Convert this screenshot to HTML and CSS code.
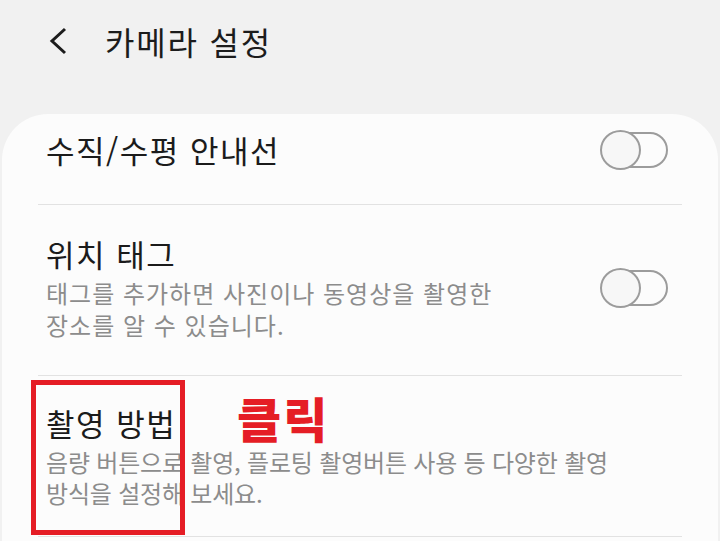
FILE: index.html
```html
<!DOCTYPE html>
<html lang="ko">
<head>
<meta charset="utf-8">
<link rel="stylesheet" href="styles.css">
</head>
<body>
<header class="appbar">
  <svg class="back" width="20" height="28" viewBox="0 0 20 28"><path d="M17 2 L4 14 L17 26" fill="none" stroke="#1c1c1c" stroke-width="3"/></svg>
  <h1 class="title">카메라 설정</h1>
</header>
<main class="card">
  <div class="row row-first">
    <div class="texts"><div class="label">수직/수평 안내선</div></div>
    <span class="toggle"><span class="knob"></span></span>
  </div>
  <div class="row row-second">
    <div class="texts">
      <div class="label">위치 태그</div>
      <div class="desc">태그를 추가하면 사진이나 동영상을 촬영한<br>장소를 알 수 있습니다.</div>
    </div>
    <span class="toggle"><span class="knob"></span></span>
  </div>
  <div class="row row-third">
    <div class="texts">
      <div class="label">촬영 방법</div>
      <div class="desc desc-tight">음량 버튼으로 촬영, 플로팅 촬영버튼 사용 등 다양한 촬영<br>방식을 설정해 보세요.</div>
    </div>
    <span class="highlight"></span>
    <span class="click">클릭</span>
  </div>
</main>
</body>
</html>
```
FILE: styles.css
```css
html, body {
  margin: 0;
  padding: 0;
  background: #f1f1f1;
  font-family: "Noto Sans CJK KR", "Noto Sans", sans-serif;
  overflow: hidden;
}
.appbar {
  height: 114px;
  box-sizing: border-box;
  display: flex;
  align-items: flex-start;
  padding: 24px 0 0 48px;
  gap: 37px;
}
.back {
  margin-top: 3px;
}
.title {
  margin: 0;
  font-size: 32px;
  line-height: 34px;
  font-weight: 400;
  color: #1c1c1c;
  letter-spacing: 1.8px;
}
.card {
  margin: 0 2px;
  background: #fcfcfc;
  border-radius: 46px 46px 0 0;
  padding: 0 36px;
  height: 440px;
}
.row {
  position: relative;
  display: flex;
  align-items: center;
  justify-content: space-between;
  padding-left: 8px;
  padding-right: 14px;
  border-bottom: 1.5px solid #e2e2e2;
}
.row-first {
  padding-top: 17px;
  padding-bottom: 35px;
}
.row-second {
  padding-top: 30px;
  padding-bottom: 34.5px;
}
.row-third {
  padding-top: 28px;
  padding-bottom: 27px;
}
.label {
  font-size: 31px;
  line-height: 38px;
  letter-spacing: 1.5px;
  color: #1b1b1b;
}
.desc {
  margin-top: 4px;
  font-size: 24px;
  line-height: 31.5px;
  letter-spacing: 1px;
  color: #8c8c8c;
}
.desc-tight {
  letter-spacing: -0.2px;
}
.toggle {
  position: relative;
  width: 67px;
  height: 36px;
  border: 2px solid #9c9c9c;
  border-radius: 20px;
  box-sizing: border-box;
  flex: none;
}
.knob {
  position: absolute;
  left: -3px;
  top: -4px;
  width: 41px;
  height: 40px;
  box-sizing: border-box;
  border: 2px solid #9c9c9c;
  border-radius: 50%;
  background: #f7f7f7;
}
.highlight {
  position: absolute;
  left: -7px;
  top: 4px;
  width: 154px;
  height: 155px;
  box-sizing: border-box;
  border: 5px solid #e51d25;
}
.click {
  position: absolute;
  left: 199px;
  top: 11px;
  font-size: 48px;
  line-height: 60px;
  font-weight: 900;
  letter-spacing: 2px;
  color: #e51d25;
}
```
